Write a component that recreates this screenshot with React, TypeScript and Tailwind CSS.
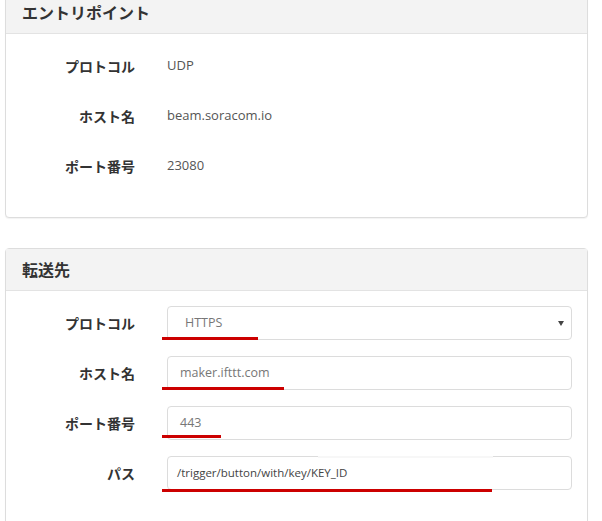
import React from 'react';

const font = { fontFamily: '"Open Sans", "Noto Sans CJK JP", sans-serif' };

type Row = { label: string; value: string };

const entryRows: Row[] = [
  { label: 'プロトコル', value: 'UDP' },
  { label: 'ホスト名', value: 'beam.soracom.io' },
  { label: 'ポート番号', value: '23080' },
];

function Panel({ title, children }: { title: string; children: React.ReactNode }) {
  return (
    <div className="rounded-[4px] border border-[#dddddd] bg-white shadow-[0_1px_1px_rgba(0,0,0,0.05)]">
      <div className="flex h-[42px] items-center border-b border-[#e3e3e3] bg-[#f3f3f3] px-[16px] text-[16px] font-semibold text-[#333]">
        {title}
      </div>
      <div className="flex flex-col gap-[16px] px-[15px] pt-[15px] pb-[34px]">{children}</div>
    </div>
  );
}

function Label({ children }: { children: React.ReactNode }) {
  return (
    <div className="w-[114px] shrink-0 text-right text-[14px] font-bold text-[#333]">{children}</div>
  );
}

// red annotation line drawn under a field
function Mark({ top, width }: { top: number; width: number }) {
  return (
    <div
      className="absolute left-[141px] h-[3px] bg-[#cc0000]"
      style={{ top, width }}
    />
  );
}

export default function App() {
  return (
    <div className="min-h-[521px] bg-white pl-[5px] pr-[14px]" style={font}>
      <div className="mt-[-9px]">
        <Panel title="エントリポイント">
          {entryRows.map((r) => (
            <div key={r.label} className="flex h-[34px] items-center gap-[32px]">
              <Label>{r.label}</Label>
              <div className="text-[13px] text-[#555]">{r.value}</div>
            </div>
          ))}
        </Panel>
      </div>

      <div className="mt-[30px]">
        <Panel title="転送先">
          <div className="relative flex h-[34px] items-center gap-[32px]">
            <Label>プロトコル</Label>
            <div className="relative flex h-[34px] flex-1 items-center rounded-[4px] border border-[#dcdcdc] pl-[17px] pr-[7px] text-[12.5px] text-[#777]">
              <span className="flex-1">HTTPS</span>
              <svg width="6" height="5" viewBox="0 0 6 5">
                <path d="M0 0 H6 L3 5 Z" fill="#444" />
              </svg>
            </div>
            <Mark top={31} width={96} />
          </div>

          <div className="relative flex h-[34px] items-center gap-[32px]">
            <Label>ホスト名</Label>
            <div className="flex h-[34px] flex-1 items-center rounded-[4px] border border-[#dcdcdc] px-[12px] text-[12.5px] text-[#777]">
              maker.ifttt.com
            </div>
            <Mark top={31} width={122} />
          </div>

          <div className="relative flex h-[34px] items-center gap-[32px]">
            <Label>ポート番号</Label>
            <div className="flex h-[34px] flex-1 items-center rounded-[4px] border border-[#dcdcdc] px-[12px] text-[12.5px] text-[#777]">
              443
            </div>
            <Mark top={29} width={59} />
          </div>

          <div className="relative flex h-[34px] items-center gap-[32px]">
            <Label>パス</Label>
            <div className="relative flex h-[34px] flex-1 items-center rounded-[4px] border border-[#dcdcdc] px-[9px] text-[11.5px] text-[#444]">
              /trigger/button/with/key/KEY_ID
              <div className="absolute top-[-1px] left-[150px] h-[2px] w-[175px] bg-[#f7f7f7]" />
            </div>
            <Mark top={33} width={330} />
          </div>
        </Panel>
      </div>
    </div>
  );
}
